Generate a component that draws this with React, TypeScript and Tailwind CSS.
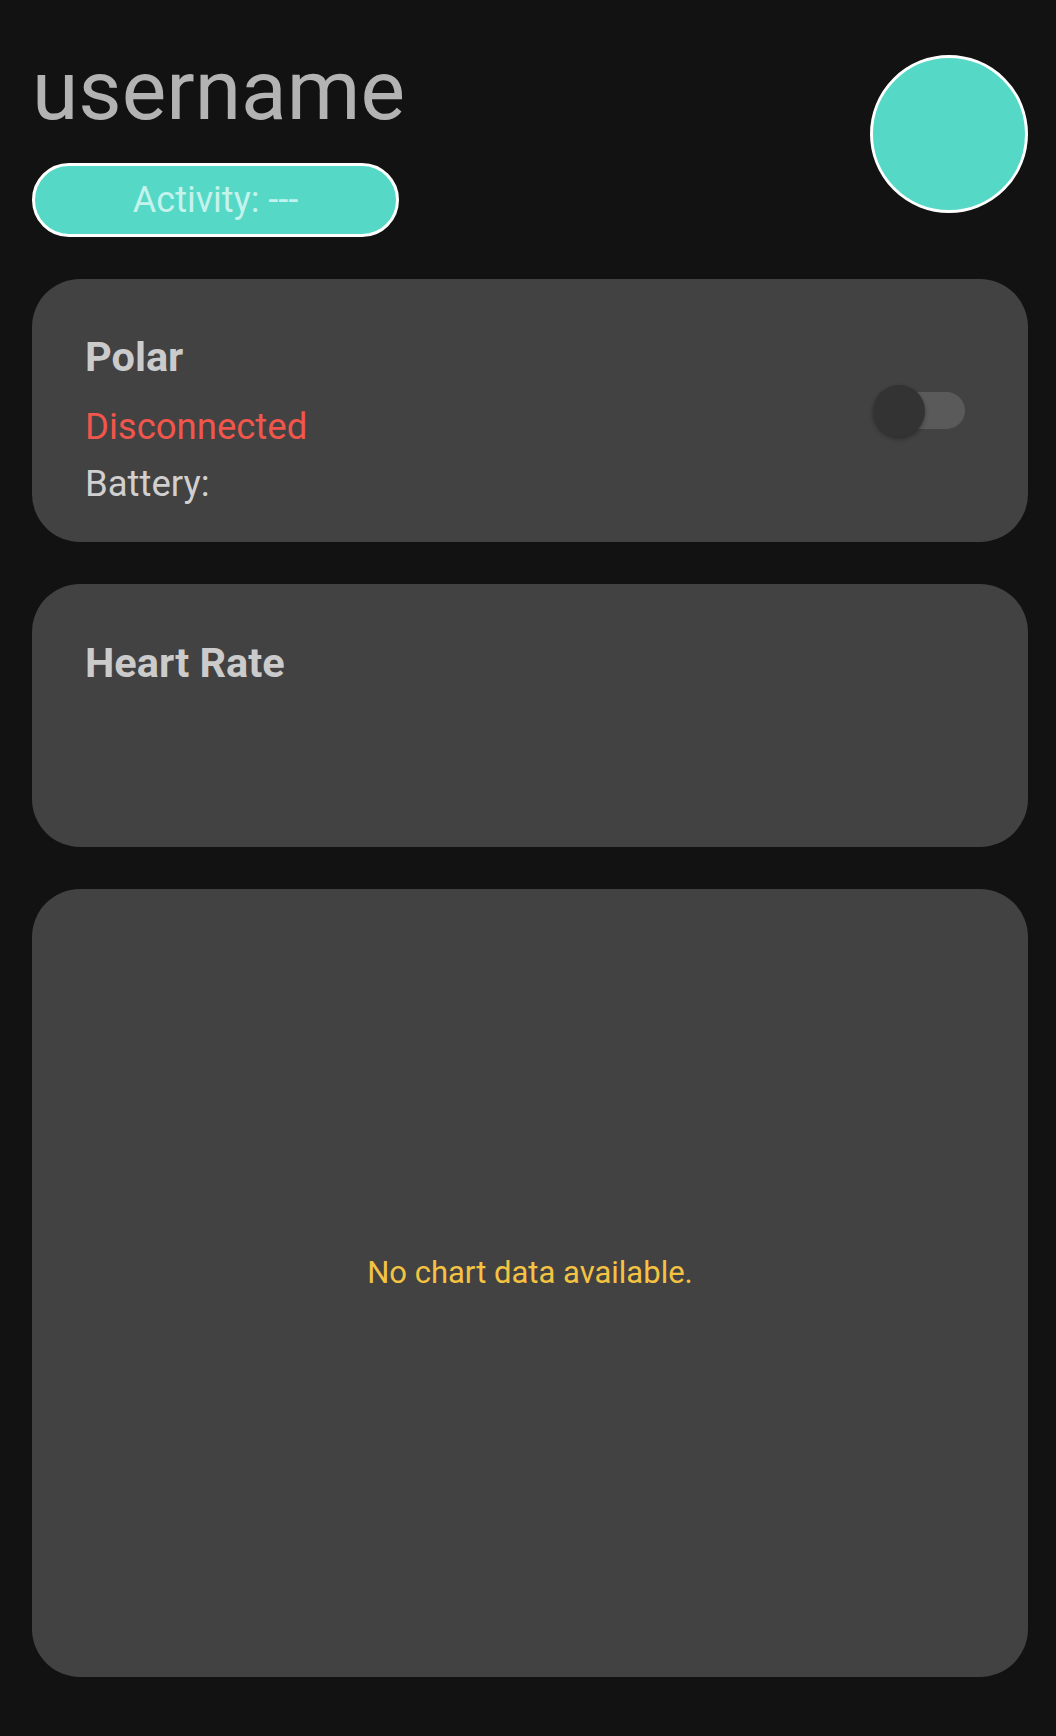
import React from 'react';

function Toggle() {
  return (
    <div className="relative w-[92px] h-[52px] shrink-0">
      <div className="absolute left-0 right-0 top-[7.5px] h-[37px] rounded-full bg-[#5a5a5a]" />
      <div className="absolute left-0 top-0 w-[52px] h-[52px] rounded-full bg-[#333333] shadow-[0_2px_4px_rgba(0,0,0,0.35)]" />
    </div>
  );
}

function App() {
  return (
    <div className="min-h-screen w-[1056px] h-[1736px] bg-[#121212] pl-[32px] pr-[28px] pt-[49px] font-['Roboto',sans-serif] overflow-hidden">
      {/* Header */}
      <div className="flex items-start justify-between">
        <div className="flex flex-col">
          <div className="text-[84px] text-[#b3b3b3] leading-none">username</div>
          <div className="mt-[30px] w-[367px] h-[74px] rounded-full border-[3px] border-white bg-[#56d8c6] flex items-center justify-center">
            <span className="text-[36px] text-[#c3f3ec] leading-none">Activity: ---</span>
          </div>
        </div>
        <div className="mt-[6px] w-[158px] h-[158px] rounded-full border-[3px] border-white bg-[#56d8c6]" />
      </div>

      {/* Polar device */}
      <div className="mt-[42px] h-[263px] rounded-[48px] bg-[#424242] pl-[53px] pr-[63px] flex items-center justify-between">
        <div className="flex flex-col self-start pt-[57px]">
          <div className="text-[41.5px] font-bold text-[#cbcbcb] leading-none">Polar</div>
          <div className="mt-[31px] text-[36.5px] text-[#f0564b] leading-none">Disconnected</div>
          <div className="mt-[21px] text-[36.5px] text-[#d0d0d0] leading-none">Battery:</div>
        </div>
        <Toggle />
      </div>

      {/* Heart rate */}
      <div className="mt-[42px] h-[263px] rounded-[48px] bg-[#424242] pl-[53px] pt-[58px]">
        <div className="text-[41.5px] font-bold text-[#cbcbcb] leading-none">Heart Rate</div>
      </div>

      {/* Chart */}
      <div className="mt-[42px] h-[788px] rounded-[48px] bg-[#424242] flex items-center justify-center pb-[22px]">
        <span className="text-[31px] text-[#f5c242] leading-none">No chart data available.</span>
      </div>
    </div>
  );
}

export default App;
